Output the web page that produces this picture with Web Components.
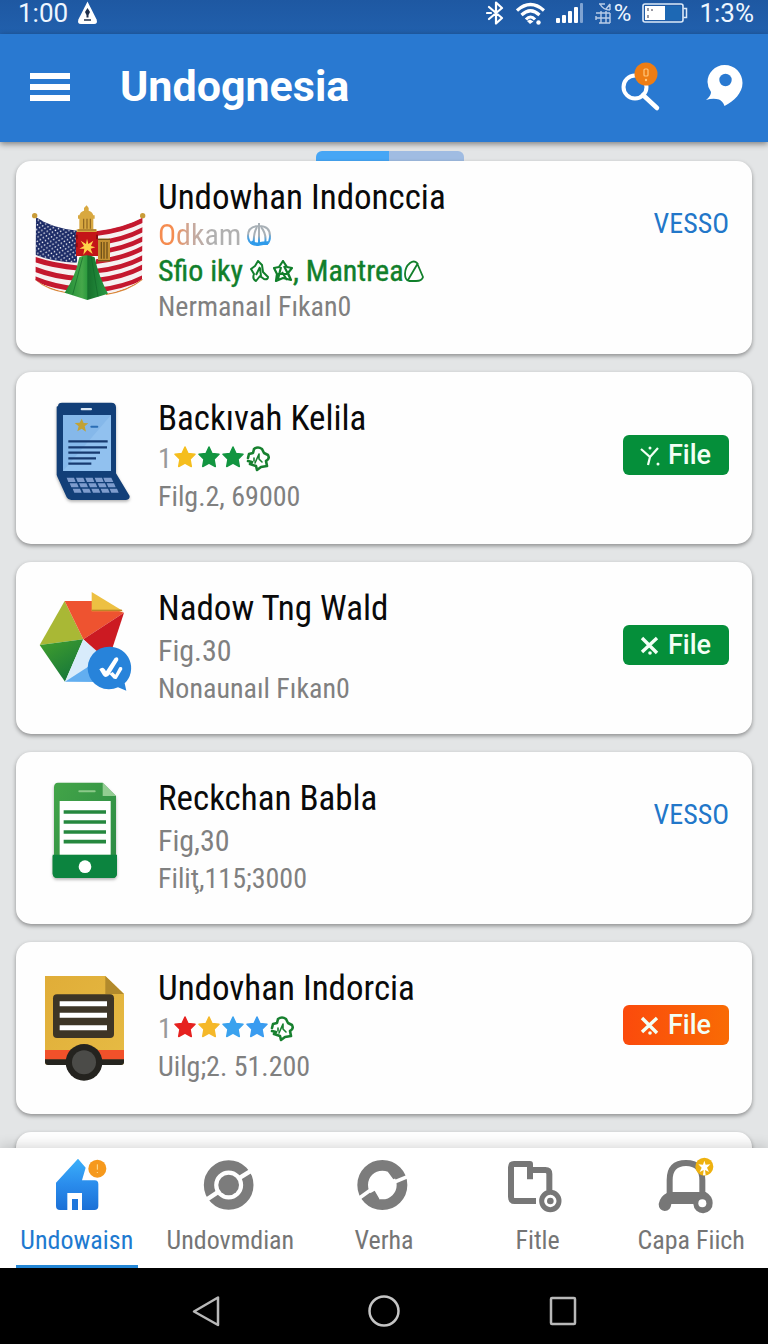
<!DOCTYPE html>
<html lang="id">
<head>
<meta charset="utf-8">
<meta name="viewport" content="width=device-width, initial-scale=1">
<title>Undognesia</title>
<style>
  html, body { margin: 0; background: #e3e5e6; }
</style>
</head>
<body>
<app-shell></app-shell>

<template id="status-bar">
  <style>
    :host { display: block; background: linear-gradient(#1e58a2, #2160ad); color: #eef6ff; font: 400 26px/26px Roboto, sans-serif; }
    .row { display: flex; align-items: center; justify-content: space-between; height: 26px; padding: 0 14px 8px 18px; }
    .group { display: flex; align-items: center; }
    .left { gap: 9px; }
    .right { gap: 11px; }
    .pair { display: flex; align-items: center; gap: 3px; }
    svg { display: block; }
    .pct { font-size: 24px; }
  </style>
  <div class="row">
    <div class="group left">
      <span>1:00</span>
      <svg width="21" height="24" viewBox="0 0 21 24"><path d="M10.500 0.500 19.600 18.500Q21 23 17 23H4Q0 23 1.400 18.500Z" fill="#fff"/><path d="M10.500 7 13 11 11.500 14V16.500H9.500V14L8 11Z" fill="#1f2f4a"/><path d="M7 19h7" stroke="#1f2f4a" stroke-width="1.500"/></svg>
    </div>
    <div class="group right">
      <svg width="19" height="24" viewBox="0 0 19 24" fill="none" stroke="#fff" stroke-width="2.200" stroke-linejoin="round" stroke-linecap="round"><path d="M3 6 16 17 10 22.500V1.500L16 7 3 18M1 12h4"/></svg>
      <svg width="29" height="23" viewBox="0 0 29 23" fill="none" stroke="#fff" stroke-width="3.200"><path d="M1 8.500Q14.500-3.500 28 8.500M5.500 13Q14.500 4.500 23.500 13M10 17.500Q14.500 12.500 19 17.500"/><path d="M14 22l-3-3 3-1.500 3.500 2z" fill="#fff" stroke="none"/><circle cx="22.500" cy="20.500" r="2.200" fill="#fff" stroke="none"/></svg>
      <svg width="28" height="20" viewBox="0 0 28 20" fill="#fff"><rect y="15" width="4" height="5" rx="1"/><rect x="6" y="12" width="4" height="8" rx="1"/><rect x="12" y="8" width="4" height="12" rx="1"/><rect x="18" y="4" width="4" height="16" rx="1"/><rect x="24" width="3" height="20" rx="1" fill="#7fa3d2"/></svg>
      <div class="pair">
        <svg width="16" height="21" viewBox="0 0 16 21" fill="none" stroke="#b9cde8" stroke-width="1.400"><path d="M4 1h6M5 1q3 6 10 6M15 1v6M15 1l-4 5M1 10h14M1 15h14M4 20h11M6 8v12M11 8v12M15 10v10M1 13v4"/></svg>
        <span class="pct">%</span>
      </div>
      <svg width="46" height="20" viewBox="0 0 46 20"><rect x="1" y="1" width="40" height="18" rx="2" fill="none" stroke="#dce9f8" stroke-width="1.600"/><rect x="3" y="3" width="20" height="14" fill="#fff"/><rect x="23" y="3" width="16" height="14" fill="#1d68b4"/><path d="M41.500 5.500h3v9h-3" fill="none" stroke="#dce9f8" stroke-width="1.500"/><path d="M6 5v3M6 12v3M10 6v2" stroke="#556" stroke-width="1.200"/></svg>
      <span>1:3%</span>
    </div>
  </div>
</template>

<template id="app-bar">
  <style>
    :host { display: block; position: relative; z-index: 2; background: #2979d1; box-shadow: 0 2px 6px rgba(0,0,0,.45); }
    header { display: flex; align-items: center; height: 108px; padding: 0 25px 0 30px; box-sizing: border-box; }
    h1 { flex: 1; margin: 0 0 0 50px; padding-bottom: 4px; color: #fff; font: 700 43px/52px Roboto, sans-serif; }
    button { display: block; padding: 0; border: 0; background: none; color: #fff; cursor: pointer; }
    .actions { display: flex; align-items: center; gap: 45px; }
    svg { display: block; }
  </style>
  <header>
    <button aria-label="Menu"><svg width="40" height="34" viewBox="0 0 40 34" fill="#fff"><path d="M0 2h40v6H0zM0 13h40v6H0zM0 24h40v6H0z"/></svg></button>
    <h1><slot></slot></h1>
    <div class="actions">
      <button aria-label="Search"><svg width="40" height="52" viewBox="0 0 40 52"><circle cx="14" cy="25" r="11.500" fill="none" stroke="#fff" stroke-width="4"/><path d="M22 33 36 46" stroke="#fff" stroke-width="4.500" stroke-linecap="round"/><circle cx="25" cy="12" r="11.500" fill="#ee7d14"/><rect x="23" y="7" width="4" height="7" rx="1" fill="none" stroke="#ffc77d" stroke-width="1.200"/><circle cx="25" cy="18" r="1.200" fill="#ffc77d"/></svg></button>
      <button aria-label="Places"><svg width="37" height="46" viewBox="0 0 37 46"><path d="M18.500 0C29 0 36.500 8 36.500 18C36.500 28 28 36 18.500 41C17.500 38 15.500 35.500 13 34.500Q7 33 0 35Q5 31 5 27Q1.500 22 1.500 17C1.500 8 9 0 18.500 0Z" fill="#fff"/><circle cx="19.500" cy="15" r="6.200" fill="#2979d1"/></svg></button>
    </div>
  </header>
</template>

<template id="result-card">
  <style>
    :host { display: block; flex: none; }
    article { display: flex; align-items: flex-start; min-height: 172px; padding: 0 23px 0 16px; box-sizing: border-box; border-radius: 15px; background: #fefefe; box-shadow: 0 2px 4px rgba(0,0,0,.38); font-family: "Roboto Condensed", Roboto, sans-serif; }
    .art { flex: none; width: 112px; padding-top: 24px; }
    .text { flex: 1; min-width: 0; padding: 26px 0 20px 14px; }
    h2 { margin: 0; color: #0a0a0a; font-weight: 400; font-size: 35px; line-height: 42px; }
    .lines { color: #808080; font-size: 28px; line-height: 38px; }
    .action { flex: none; padding-top: 63px; }
    :host([kind="plain"]) .lines { padding-top: 2px; }
    :host([kind="featured"]) article { min-height: 193px; }
    :host([kind="featured"]) .art { padding-top: 35px; }
    :host([kind="featured"]) .text { padding-top: 18px; }
    :host([kind="featured"]) h2 { line-height: 38px; }
    :host([kind="featured"]) .lines { line-height: 36px; }
    ::slotted(svg) { display: block; }
  </style>
  <article>
    <div class="art"><slot name="art"></slot></div>
    <div class="text"><h2><slot name="title"></slot></h2><div class="lines"><slot></slot></div></div>
    <div class="action"><slot name="action"></slot></div>
  </article>
</template>

<template id="star-rating">
  <style>
    :host { display: flex; align-items: center; height: 38px; }
    .n { width: 16px; color: #999; }
    .stars { display: flex; gap: 2px; }
    svg { display: block; }
  </style>
  <span class="n"><slot></slot></span><div class="stars"></div>
</template>

<template id="file-button">
  <style>
    :host { display: block; }
    button { display: flex; align-items: center; gap: 8px; height: 40px; padding: 0 18px 0 17px; border: 0; border-radius: 6px; background: #058f3a; color: #f2fff5; font: 500 27px/40px Roboto, sans-serif; cursor: pointer; }
    :host([tone="orange"]) button { background: linear-gradient(90deg, #fb4a0c, #f96b04); }
    svg { display: block; }
  </style>
  <button><span class="icon"></span><slot></slot></button>
</template>

<template id="nav-item">
  <style>
    :host { display: block; }
    a { display: flex; flex-direction: column; align-items: center; height: 120px; padding-top: 8px; box-sizing: border-box; color: #757575; text-decoration: none; font: 400 26px/32px "Roboto Condensed", Roboto, sans-serif; }
    ::slotted(svg) { display: block; overflow: visible; }
    .label { padding-top: 8px; white-space: nowrap; }
    .bar { width: 122px; height: 3px; margin-top: auto; }
    :host([active]) a { color: #1e7ad0; }
    :host([active]) .bar { background: #2487d6; }
  </style>
  <a href="#"><slot name="icon"></slot><span class="label"><slot></slot></span><span class="bar"></span></a>
</template>

<template id="system-bar">
  <style>
    :host { display: block; background: #000; }
    div { display: flex; justify-content: center; align-items: center; gap: 146px; height: 76px; }
    button { display: block; padding: 10px 0 0; border: 0; background: none; cursor: pointer; }
    svg { display: block; }
  </style>
  <div>
    <button aria-label="Back"><svg width="32" height="32" viewBox="0 0 32 32" fill="none" stroke="#b8b8b8" stroke-width="2.500" stroke-linejoin="round"><path d="M28 2.500V30L4 16.500Z"/></svg></button>
    <button aria-label="Home"><svg width="32" height="32" viewBox="0 0 32 32" fill="none" stroke="#c4c4c4" stroke-width="2.500"><circle cx="16" cy="16" r="14.500"/></svg></button>
    <button aria-label="Recent apps"><svg width="32" height="32" viewBox="0 0 32 32" fill="none" stroke="#b8b8b8" stroke-width="2.500"><rect x="5" y="3" width="24" height="26" rx="1"/></svg></button>
  </div>
</template>

<template id="app-shell">
  <style>
    :host { display: flex; flex-direction: column; height: 100vh; background: #e3e5e6; }
    main { flex: 1 1 0; min-height: 0; overflow-y: auto; scrollbar-width: none; display: flex; flex-direction: column; padding: 9px 16px 0; }
    .indicator { flex: none; align-self: center; width: 148px; height: 10px; margin-left: 12px; border-radius: 6px 6px 0 0; background: linear-gradient(90deg, #46a6f5 49%, #a0bce2 49%); }
    .list { display: flex; flex-direction: column; gap: 18px; }
    nav { display: grid; grid-template-columns: repeat(5, 1fr); position: relative; background: #fff; box-shadow: 0 -2px 12px rgba(0,0,0,.16); }
    .odkam { display: flex; align-items: center; gap: 6px; font-size: 30px; }
    .odkam span { background: linear-gradient(90deg, #f58c50 18%, #c9a99d 40%, #b0b0b0 65%); -webkit-background-clip: text; background-clip: text; color: transparent; }
    .green { display: flex; align-items: center; color: #117f2b; font-size: 30px; white-space: pre; -webkit-text-stroke: 0.4px #117f2b; }
    .green svg { flex: none; margin-left: 4px; }
    .green svg.tight { margin-left: 0; }
    .big { font-size: 30px; }
    a.link { display: block; margin-top: -20px; color: #2277c9; text-decoration: none; font: 400 28px/40px "Roboto Condensed", Roboto, sans-serif; }
  </style>
  <status-bar></status-bar>
  <app-bar>Undognesia</app-bar>
  <main>
    <div class="indicator"></div>
    <div class="list">
      <result-card kind="featured">
        <svg slot="art" width="112" height="120" viewBox="48 78 336 360" overflow="visible">
          <defs>
            <clipPath id="fl"><path d="M60 142Q110 176 184 182V370L150 366Q95 355 58 330Z"/></clipPath>
            <clipPath id="fr"><path d="M240 182Q320 174 380 142L378 328Q335 360 270 371L240 370Z"/></clipPath>
            <pattern id="st" width="16" height="14" patternUnits="userSpaceOnUse" patternTransform="rotate(10)"><circle cx="4" cy="4" r="2.300" fill="#fff"/><circle cx="12" cy="11" r="2.300" fill="#fff"/></pattern>
            <linearGradient id="tent"><stop offset="0" stop-color="#1f8a35"/><stop offset=".4" stop-color="#46a84a"/><stop offset=".52" stop-color="#2c9a3e"/><stop offset=".53" stop-color="#16702c"/><stop offset="1" stop-color="#2a9a44"/></linearGradient>
          </defs>
          <path d="M58 328Q95 360 152 368M379 328Q335 364 270 373" fill="none" stroke="#d9863a" stroke-width="4"/>
          <g clip-path="url(#fl)"><rect x="50" y="130" width="140" height="250" fill="#f6f1f2"/>
            <g fill="none" stroke="#c4182e" stroke-width="15"><path d="M50 266Q110 288 190 294M50 295Q110 320 190 326M50 324Q110 350 190 358"/></g>
            <path d="M50 130H184V278Q110 276 58 254Z" fill="#1b2a66"/><path d="M50 130H184V278Q110 276 58 254Z" fill="url(#st)"/></g>
          <g clip-path="url(#fr)"><rect x="236" y="130" width="150" height="250" fill="#f6f1f2"/>
            <g fill="none" stroke="#c4182e" stroke-width="14"><path d="M230 192Q320 184 386 148M230 220Q320 212 386 176M230 248Q320 240 386 204M230 276Q320 268 386 232M230 304Q320 296 386 260M230 332Q320 324 386 288M230 362Q320 354 386 320"/></g></g>
          <circle cx="56" cy="137" r="8" fill="#c99c38"/><circle cx="380" cy="137" r="8" fill="#c99c38"/>
          <path d="M212 106l6 8v8q12 4 14 14h4v10h-4v32h10v10h-60v-10h8v-32h-4v-10h4q2-10 14-14v-8z" fill="#d8a840"/><path d="M203 146v30M213 146v30M223 146v30M186 180h54" stroke="#8d6420" stroke-width="3.500"/>
          <rect x="246" y="206" width="36" height="68" fill="#c49032"/><path d="M246 208h36M246 272h36M256 216v50M264 216v50M273 216v50" stroke="#6f5018" stroke-width="4"/>
          <rect x="180" y="186" width="66" height="72" fill="#c41518"/><path d="M182 194v14M182 218v14M243 194v14" stroke="#8c0c10" stroke-width="6"/>
          <path d="M213 206 217 222 232 212 225 228 238 232 224 236 230 252 214 240 202 254 205 236 190 236 204 228 194 212 210 222Z" fill="#ffd24a"/>
          <path d="M190 262Q212 250 236 262Q248 320 276 371L214 390 146 368Q178 320 190 262Z" fill="url(#tent)"/><path d="M200 262 170 374M226 262 246 380" stroke="#116628" stroke-width="2"/>
        </svg>
        <span slot="title">Undowhan Indonccia</span>
        <div class="odkam"><span>Odkam</span><svg width="24" height="26" viewBox="0 0 24 26" fill="none"><defs><linearGradient id="um" x2="0" y2="1"><stop offset=".5" stop-color="#a8b0b6"/><stop offset=".75" stop-color="#3f9fe6"/></linearGradient></defs><path d="M12 1V4M6 22Q1 20 1 14Q1 4 12 4T23 14Q23 20 20 22Z" stroke="url(#um)" stroke-width="2"/><path d="M10 5Q6 12 7 22M12 5V23M14 5Q20 12 18 22" stroke="url(#um)" stroke-width="2"/><path d="M4 20Q8 23 12 22T21 21" stroke="#2f9bea" stroke-width="3.500"/></svg></div>
        <div class="green">Sfio iky <svg class="tight" width="19" height="22" viewBox="0 0 19 22" fill="none" stroke="#117f2b" stroke-width="2" stroke-linejoin="round"><path d="M8 1 12 5 13 12 18 17Q18 20 14 19L10 16 6 21Q2 19 4 14L1 9 5 6ZM10 7 6 15M10 8l1 8"/></svg><svg width="20" height="22" viewBox="0 0 20 22" fill="none" stroke="#117f2b" stroke-width="2.200" stroke-linejoin="round"><path d="M10 1 14 7 19 8 15 13 18 20 10 18 3 21 4 14 1 8 6 7ZM8 7 5 19M11 6l7 14M5 14h9M9 12l5 8"/></svg>, Mantrea<svg class="tight" width="20" height="22" viewBox="0 0 20 22" fill="none" stroke="#117f2b" stroke-width="1.800" stroke-linejoin="round"><path d="M6 3Q10 0 13 3L19 17Q18 21 12 21H5Q1 20 1 14Q1 7 6 3ZM14 3 4 20"/></svg></div>
        <div>Nermanaıl Fıkan0</div>
        <a slot="action" class="link" href="#">VESSO</a>
      </result-card>

      <result-card kind="rated">
        <svg slot="art" width="112" height="120" viewBox="48 48 336 360" overflow="visible">
          <path d="M126 78Q126 68 138 68H286Q300 68 300 82V280L341 348Q342 359 330 360H166Q156 360 152 352L124 290Q121 285 122 275V80Z" fill="#123f78" style="filter:drop-shadow(0 5px 4px rgba(0,0,0,.3))"/>
          <rect x="194" y="84" width="34" height="7" rx="3" fill="#dce8f4"/>
          <path d="M141 105H285V273H141Z" fill="#85b8ea"/><path d="M285 105V273H141Z" fill="#91c1ef"/>
          <path d="M197 116l6 13 14 1-11 9 4 16-13-9-13 8 4-15-12-10 15-1z" fill="#c2a235"/><path d="M226 140h18" stroke="#2b6eb5" stroke-width="6" stroke-linecap="round"/>
          <path d="M157 184H275M157 202H273M157 218H252M157 235H240M157 251H226" stroke="#173a70" stroke-width="7"/>
          <g fill="#7e9ccd"><path d="M152 293h22l5 13h-22zM180 293h22l5 13h-22zM208 293h22l5 13h-22zM236 293h22l5 13h-22zM262 293h24l6 13h-25zM161 310h22l5 12h-22zM189 310h22l5 12h-22zM217 310h22l5 12h-22zM245 310h22l5 12h-22zM272 310h22l5 12h-22zM170 326h22l5 12h-22zM198 326h22l5 12h-22zM226 326h22l5 12h-22zM254 326h22l5 12h-22zM281 326h22l5 12h-22z"/></g>
        </svg>
        <span slot="title">Backıvah Kelila</span>
        <star-rating colors="#f5be1e #129540 #129540 badge">1</star-rating>
        <div>Filg.2, 69000</div>
        <file-button slot="action" icon="fork">File</file-button>
      </result-card>

      <result-card kind="plain">
        <svg slot="art" width="112" height="120" viewBox="48 48 336 360" overflow="visible">
          <defs><linearGradient id="gr" x2=".6" y2="1"><stop stop-color="#43a02c"/><stop offset="1" stop-color="#17783a"/></linearGradient></defs>
          <path d="M146 93 202 208 71 225Z" fill="#a9b835"/><path d="M146 93H228L324 128 202 208Z" fill="#ee5330"/>
          <path d="M324 128 202 208 240 245 290 232Z" fill="#cc1a22"/><path d="M71 225 202 208 147 335Z" fill="url(#gr)"/>
          <path d="M202 208 250 250 230 290 147 335Z" fill="#d8ebfb"/><path d="M147 335 220 288 250 336Z" fill="#62aef0"/>
          <path d="M227 66 322 124H227Z" fill="#edc042"/><path d="M227 121H318" stroke="#bd8527" stroke-width="4"/>
          <path d="M281 230A64 64 0 0 1 326 340L331 362 306 352A64 64 0 1 1 281 230Z" fill="#2783da"/>
          <path d="M250 298Q262 286 270 304L296 264Q308 258 307 270L279 316Q268 326 261 316ZM290 306l8 8 12-22q10-4 9 6l-17 28q-8 4-14-6l-8-8z" fill="#fff"/>
        </svg>
        <span slot="title">Nadow Tng Wald</span>
        <div class="big">Fig.30</div>
        <div>Nonaunaıl Fıkan0</div>
        <file-button slot="action" icon="cross">File</file-button>
      </result-card>

      <result-card kind="plain">
        <svg slot="art" width="112" height="120" viewBox="48 48 336 360" overflow="visible">
          <defs><linearGradient id="ph" x2="1" y2="1"><stop stop-color="#43a548"/><stop offset="1" stop-color="#2a8844"/></linearGradient></defs>
          <path d="M114 82Q114 68 126 68H260L300 108V288H303V340Q303 354 290 354H124Q110 354 110 340V288H114Z" fill="url(#ph)" style="filter:drop-shadow(0 5px 4px rgba(0,0,0,.3))"/>
          <path d="M260 68 300 108H260Z" fill="#93cd92"/><path d="M110 284H303V340Q303 354 290 354H124Q110 354 110 340Z" fill="#0c843f"/>
          <path d="M190 94h46" stroke="#8bc989" stroke-width="6" stroke-linecap="round"/><rect x="131" y="123" width="153" height="161" fill="#fff"/>
          <path d="M143 156H270M143 186H270M143 216H270M143 245H270" stroke="#26883f" stroke-width="11"/><circle cx="207" cy="320" r="19" fill="#fff"/>
        </svg>
        <span slot="title">Reckchan Babla</span>
        <div class="big">Fig,30</div>
        <div>Filiţ,115;3000</div>
        <a slot="action" class="link" href="#">VESSO</a>
      </result-card>

      <result-card kind="rated">
        <svg slot="art" width="112" height="120" viewBox="48 48 336 360" overflow="visible">
          <defs><linearGradient id="tr" x2="1" y2="1"><stop stop-color="#e0ad38"/><stop offset="1" stop-color="#e6bb44"/></linearGradient></defs>
          <path d="M87 78H268L324 132V336Q324 345 315 345H96Q87 345 87 336Z" fill="url(#tr)"/><path d="M268 78 324 132H268Z" fill="#b28a2c"/>
          <path d="M87 300H324V329H87Z" fill="#f2512a"/><path d="M87 328H324V336Q324 345 315 345H96Q87 345 87 336Z" fill="#25241f"/>
          <rect x="111" y="133" width="183" height="131" rx="12" fill="#3d3526"/><path d="M131 161H273M131 196H273M131 233H273" stroke="#fff" stroke-width="15"/>
          <circle cx="204" cy="337" r="55" fill="#24231f"/><circle cx="204" cy="337" r="36" fill="#4b4b48"/>
        </svg>
        <span slot="title">Undovhan Indorcia</span>
        <star-rating colors="#e6211f #f5b829 #3aa2ee #3a9cf0 badge">1</star-rating>
        <div>Uilg;2. 51.200</div>
        <file-button slot="action" icon="cross" tone="orange">File</file-button>
      </result-card>

      <result-card></result-card>
    </div>
  </main>
  <nav>
    <nav-item active>
      <svg slot="icon" width="60" height="60" viewBox="141 108 180 180"><defs><linearGradient id="ho" x2="0" y2="1"><stop stop-color="#3bb0fa"/><stop offset=".5" stop-color="#2a8cec"/><stop offset="1" stop-color="#1b70d6"/></linearGradient></defs><path d="M234 116 257 143 246 181H284Q295 182 295 192V258Q295 270 283 270H246V219H202V270H180Q168 270 168 258V188Z" fill="url(#ho)"/><rect x="216" y="237" width="18" height="33" fill="#1f77dc"/><circle cx="292" cy="146" r="27" fill="#f6991c"/><path d="M292 133v16M292 156v3" stroke="#ffe29a" stroke-width="3"/></svg>
      Undowaisn
    </nav-item>
    <nav-item>
      <svg slot="icon" width="60" height="60" viewBox="600 108 180 180"><circle cx="686" cy="195" r="59" fill="none" stroke="#7c7c7c" stroke-width="31"/><path d="M760 148 715 176M612 244 657 214" stroke="#fff" stroke-width="13"/><circle cx="686" cy="195" r="31" fill="#7c7c7c"/></svg>
      Undovmdian
    </nav-item>
    <nav-item>
      <svg slot="icon" width="60" height="60" viewBox="1062 108 180 180"><circle cx="1147" cy="195" r="59" fill="none" stroke="#7c7c7c" stroke-width="32"/><path d="M1100 226 1124 212 1138 236 1124 246ZM1164 156 1180 178 1194 172 1186 146Z" fill="#7c7c7c"/><path d="M1230 167 1176 189M1070 240 1119 205" stroke="#fff" stroke-width="11"/></svg>
      Verha
    </nav-item>
    <nav-item>
      <svg slot="icon" width="60" height="60" viewBox="372 108 180 180"><g fill="none" stroke="#777" stroke-linejoin="round"><path d="M438 178V132H390Q381 132 381 142V230Q381 243 392 243H456M438 150H484Q496 150 496 162V212" stroke-width="18"/></g><circle cx="499" cy="243" r="26" fill="none" stroke="#777" stroke-width="15"/><circle cx="499" cy="243" r="10" fill="#777"/></svg>
      Fitle
    </nav-item>
    <nav-item>
      <svg slot="icon" width="60" height="60" viewBox="831 108 180 180"><path d="M857 226V180Q857 129 906 129T955 180V226" fill="none" stroke="#777" stroke-width="18"/><path d="M850 216H965Q986 228 986 249A29 29 0 0 1 928 252H862Q860 272 842 273Q824 270 824 252Q828 228 850 218Z" fill="#777"/><circle cx="955" cy="250" r="12" fill="#fff"/><circle cx="961" cy="140" r="27" fill="#eeb10f"/><path d="M961 122l4 12 14-1-10 10 6 13-12-6 2 16h-8l2-16-12 6 6-13-10-10 14 1z" fill="#fff"/></svg>
      Capa Fiich
    </nav-item>
  </nav>
  <system-bar></system-bar>
</template>

<script>
  class TemplateElement extends HTMLElement {
    constructor() {
      super();
      const template = document.getElementById(this.localName);
      this.attachShadow({ mode: 'open' }).append(template.content.cloneNode(true));
    }
  }

  const STAR = c => `<svg width="22" height="22" viewBox="0 0 22 22"><path d="M11 1 14 7.500 21 8.300 16 13.200 17.300 20.500 11 17 4.700 20.500 6 13.200 1 8.300 8 7.500Z" fill="${c}" stroke="${c}" stroke-width="1.500" stroke-linejoin="round"/></svg>`;
  const BADGE = `<svg width="24" height="26" viewBox="0 0 24 26" fill="none" stroke="#17802f" stroke-linejoin="round" stroke-linecap="round"><path d="M8 3Q12 0 16 3L18 7 22 9Q24 13 20 15L21 20 15 21 11 24 10 20 4 18 6 16 2 15M2 12 3 8 7 7 8 3" stroke-width="2.600"/><path d="M13 8 9 17M13 8v5l3 3M8 12v3" stroke-width="1.600"/></svg>`;

  class StarRating extends TemplateElement {
    connectedCallback() {
      this.shadowRoot.querySelector('.stars').innerHTML = this.getAttribute('colors').split(' ')
        .map(c => c === 'badge' ? BADGE : STAR(c)).join('');
    }
  }

  const ICONS = {
    fork: '<path d="M1 4 10 12 18 3M10 12 8 20" stroke-width="2.200"/><circle cx="10" cy="3" r="1.500" fill="currentColor" stroke="none"/><circle cx="18" cy="19" r="1.500" fill="currentColor" stroke="none"/>',
    cross: '<path d="M2 3 17 18M17 3 2 17" stroke-width="3.400"/><circle cx="10" cy="18" r="1.800" fill="currentColor" stroke="none"/>'
  };

  class FileButton extends TemplateElement {
    connectedCallback() {
      this.shadowRoot.querySelector('.icon').innerHTML =
        `<svg width="20" height="21" viewBox="0 0 20 21" fill="none" stroke="currentColor">${ICONS[this.getAttribute('icon')]}</svg>`;
    }
  }

  customElements.define('status-bar', class extends TemplateElement {});
  customElements.define('app-bar', class extends TemplateElement {});
  customElements.define('result-card', class extends TemplateElement {});
  customElements.define('star-rating', StarRating);
  customElements.define('file-button', FileButton);
  customElements.define('nav-item', class extends TemplateElement {});
  customElements.define('system-bar', class extends TemplateElement {});
  customElements.define('app-shell', class extends TemplateElement {});
</script>
</body>
</html>
